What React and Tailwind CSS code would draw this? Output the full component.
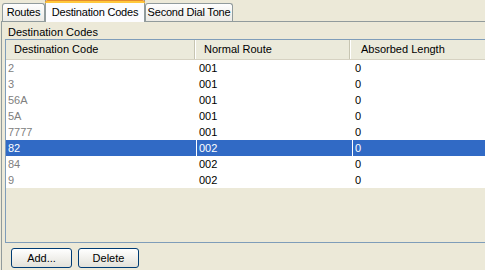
import React from "react";

const rows = [
  ["2", "001", "0"],
  ["3", "001", "0"],
  ["56A", "001", "0"],
  ["5A", "001", "0"],
  ["7777", "001", "0"],
  ["82", "002", "0"],
  ["84", "002", "0"],
  ["9", "002", "0"],
];

export default function App() {
  const selected = 5;
  return (
    <div
      className="w-[485px] h-[270px] bg-[#ece9d8] text-[11px] text-black overflow-hidden flex flex-col"
      style={{ fontFamily: '"Liberation Sans", Arial, sans-serif' }}
    >
      {/* Tabs */}
      <div className="flex items-end h-[21px] pl-[2px] shrink-0 tracking-[-0.2px]">
        <div className="w-[43px] h-[18px] flex items-center justify-center border border-b-0 border-[#919b9c] rounded-t-[3px] bg-gradient-to-b from-[#fefefe] to-[#ecebe6]">
          Routes
        </div>
        <div className="relative w-[100px] h-[22px] flex items-center justify-center border-x border-[#919b9c] bg-[#fcfcfe] -mb-px z-10">
          <div className="absolute left-[-1px] right-[-1px] top-0 h-[3px] rounded-t-[3px] bg-[#ffc83c] border-t border-[#e68b2c]" />
          <span className="pt-[2px]">Destination Codes</span>
        </div>
        <div className="w-[88px] h-[18px] flex items-center justify-center border border-b-0 border-[#919b9c] rounded-t-[3px] bg-gradient-to-b from-[#fefefe] to-[#ecebe6]">
          Second Dial Tone
        </div>
      </div>

      {/* Panel */}
      <div className="flex-1 flex flex-col border-t border-l border-[#919b9c] ml-[1px] bg-[#ece9d8]">
        <div className="h-[16px] pl-[6px] pt-[4px] leading-[13px]">Destination Codes</div>

        <div className="ml-[3px] mt-[1px] h-[204px] border-y border-l border-[#7f9db9] bg-[#ece9d8] flex flex-col">
          {/* Header */}
          <div className="grid grid-cols-[189px_155px_1fr] h-[20px] bg-[#ebeadb] border-b border-[#d6d2c2]">
            <div className="flex items-center pl-[8px] border-r border-[#c7c5b2]">Destination Code</div>
            <div className="flex items-center pl-[8px] border-r border-[#c7c5b2] border-l border-l-white">Normal Route</div>
            <div className="flex items-center pl-[10px] border-l border-l-white">Absorbed Length</div>
          </div>

          {/* Rows */}
          <div className="flex flex-col">
            {rows.map((r, i) => {
              const sel = i === selected;
              return (
                <div
                  key={i}
                  className={
                    "grid grid-cols-[190px_156px_1fr] h-[16px] leading-[16px] " +
                    (sel ? "bg-[#316ac5] text-white" : "bg-white")
                  }
                >
                  <div className={"pl-[2px] " + (sel ? "text-white" : "text-[#808080]")}>{r[0]}</div>
                  <div className="pl-[2px] border-l border-white">{r[1]}</div>
                  <div className="pl-[2px] border-l border-white">{r[2]}</div>
                </div>
              );
            })}
          </div>
        </div>

        {/* Buttons */}
        <div className="flex gap-[6px] pl-[9px] pt-[5px]">
          <button className="w-[61px] h-[20px] border border-[#003c74] rounded-[3px] bg-gradient-to-b from-white to-[#e3e2da] flex items-center justify-center">
            Add...
          </button>
          <button className="w-[61px] h-[20px] border border-[#003c74] rounded-[3px] bg-gradient-to-b from-white to-[#e3e2da] flex items-center justify-center">
            Delete
          </button>
        </div>
      </div>
    </div>
  );
}
